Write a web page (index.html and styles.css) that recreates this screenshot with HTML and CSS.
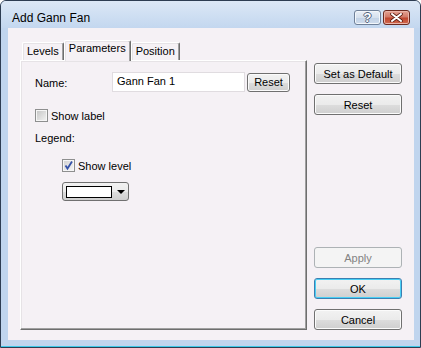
FILE: index.html
```html
<!DOCTYPE html>
<html>
    <head>
        <title>Add Gann Fan</title>
        <link rel="stylesheet" href="styles.css">
    </head>
    <body>
        <div class="window">
            <div class="titlebar">
                <span class="title">Add Gann Fan</span>
                <div class="caption-buttons">
                    <span class="cap-btn help">?</span>
                    <span class="cap-btn close">
                        <svg width="13" height="9" viewBox="0 0 13 9">
                            <path d="M2 1 L11 8 M11 1 L2 8" stroke="#5a1d12" stroke-width="3.6" stroke-linecap="round"/>
                            <path d="M2 1 L11 8 M11 1 L2 8" stroke="#ffffff" stroke-width="2" stroke-linecap="round"/>
                        </svg>
                    </span>
                </div>
            </div>
            <div class="frame">
                <div class="client">
                    <div class="tabs-area">
                        <div class="tab-strip">
                            <span class="tab">Levels</span>
                            <span class="tab selected">Parameters</span>
                            <span class="tab">Position</span>
                        </div>
                        <div class="panel">
                            <div class="name-row">
                                <span class="field-label">Name:</span>
                                <div class="text-input">Gann Fan 1</div>
                                <button class="btn btn-small">Reset</button>
                            </div>
                            <div class="check-row show-label">
                                <span class="checkbox"></span>
                                <span>Show label</span>
                            </div>
                            <div class="legend">Legend:</div>
                            <div class="check-row show-level">
                                <span class="checkbox checked">
                                    <svg width="11" height="11" viewBox="0 0 11 11">
                                        <path d="M2.5 5.5 L4.5 8.5 L9 1.5" fill="none" stroke="#3552a8" stroke-width="1.8"/>
                                    </svg>
                                </span>
                                <span>Show level</span>
                            </div>
                            <div class="color-picker">
                                <span class="swatch"></span>
                                <span class="arrow"></span>
                            </div>
                        </div>
                    </div>
                    <div class="side-buttons">
                        <div class="btn-group">
                            <button class="btn">Set as Default</button>
                            <button class="btn">Reset</button>
                        </div>
                        <div class="btn-group">
                            <button class="btn disabled">Apply</button>
                            <button class="btn default">OK</button>
                            <button class="btn">Cancel</button>
                        </div>
                    </div>
                </div>
            </div>
        </div>
    </body>
</html>
```

FILE: styles.css
```css
body {
    margin: 0;
    background: #ffffff;
    font-family: "Liberation Sans", Arial, sans-serif;
    font-size: 11px;
    color: #000;
}
.window {
    width: 421px;
    height: 348px;
    box-sizing: border-box;
    border: 1px solid #2d3d52;
    border-radius: 6px 6px 0 0;
    background: #c0d5ee;
    display: flex;
    flex-direction: column;
    overflow: hidden;
    box-shadow: inset 0 -1px 0 #3ec8e8;
}
.titlebar {
    height: 27px;
    flex: none;
    display: flex;
    justify-content: space-between;
    align-items: flex-start;
    padding: 0 10px 0 11px;
    background: linear-gradient(#dce8f6, #c3d7ef);
}
.title {
    margin-top: 10px;
    font-size: 12px;
    line-height: 15px;
}
.caption-buttons {
    display: flex;
    gap: 2px;
    margin-top: 9px;
}
.cap-btn {
    width: 27px;
    height: 15px;
    box-sizing: border-box;
    border-radius: 3px;
    display: flex;
    align-items: center;
    justify-content: center;
}
.help {
    border: 1px solid #6f8098;
    background: linear-gradient(#e9eff7 0%, #d6e1ee 50%, #c2d2e6 51%, #cfdcec 100%);
    box-shadow: inset 0 0 0 1px #f3f7fb;
    color: #fff;
    font-weight: bold;
    font-size: 13px;
    line-height: 13px;
    text-shadow: 1px 0 0 #50627a, -1px 0 0 #50627a, 0 1px 0 #50627a, 0 -1px 0 #50627a;
}
.close {
    width: 27px;
    border: 1px solid #6b2a20;
    background: linear-gradient(#e5a293 0%, #d27a68 45%, #c0462f 55%, #cf6a4f 100%);
    box-shadow: inset 0 0 0 1px #eab4a8;
}
.frame {
    flex: 1;
    display: flex;
    padding: 0 6px 7px 7px;
}
.client {
    flex: 1;
    display: flex;
    background: #f5f1f5;
    padding: 12px 0 10px 12px;
}
.tabs-area {
    width: 287px;
    display: flex;
    flex-direction: column;
}
.tab-strip {
    height: 20px;
    display: flex;
    align-items: flex-end;
    padding-left: 2px;
}
.tab {
    height: 18px;
    box-sizing: border-box;
    padding: 0 4px;
    line-height: 16px;
    border-top: 1px solid #ffffff;
    border-left: 1px solid #ffffff;
    border-right: 1px solid #6e6e6e;
    box-shadow: inset -1px 0 0 #a0a0a0, inset 1px 1px 0 #e6e3e6;
    border-radius: 2px 2px 0 0;
    background: #f5f1f5;
}
.tab.selected {
    height: 21px;
    line-height: 14px;
    margin-bottom: -1px;
    position: relative;
    z-index: 1;
}
.panel {
    flex: 1;
    display: flex;
    flex-direction: column;
    align-items: flex-start;
    padding: 11px 0 0 14px;
    border-top: 1px solid #ffffff;
    border-left: 1px solid #ffffff;
    border-right: 1px solid #6e6e6e;
    border-bottom: 1px solid #6e6e6e;
    box-shadow: inset -1px -1px 0 #a0a0a0, inset 1px 1px 0 #e6e3e6;
}
.name-row {
    height: 20px;
    display: flex;
    align-items: center;
}
.field-label {
    width: 77px;
    padding-top: 2px;
}
.text-input {
    width: 133px;
    height: 20px;
    box-sizing: border-box;
    border: 1px solid #e0dce0;
    background: #ffffff;
    padding-left: 4px;
    line-height: 17px;
}
.btn {
    width: 88px;
    height: 21px;
    box-sizing: border-box;
    padding: 0;
    border: 1px solid #707070;
    border-radius: 3px;
    background: linear-gradient(#f2f2f2 0%, #ebebeb 50%, #dddddd 51%, #cfcfcf 100%);
    box-shadow: inset 0 0 0 1px #fbfbfb;
    font-family: "Liberation Sans", Arial, sans-serif;
    font-size: 11px;
    color: #000;
}
.btn-small {
    width: 43px;
    height: 19px;
    margin-left: 2px;
}
.btn.disabled {
    border-color: #adb2b5;
    background: #f4f4f4;
    box-shadow: none;
    color: #838383;
}
.btn.default {
    border-color: #3c7fb1;
    box-shadow: inset 0 0 0 1px #48cff5;
}
.check-row {
    height: 13px;
    display: flex;
    align-items: center;
    gap: 3px;
}
.show-label {
    margin-top: 17px;
}
.checkbox {
    width: 13px;
    height: 13px;
    box-sizing: border-box;
    border: 1px solid #8e8f8f;
    background: linear-gradient(135deg, #c3c3c3, #f4f4f4);
    box-shadow: inset 0 0 0 1px #f6f6f6;
    display: flex;
}
.checkbox.checked {
    background: linear-gradient(135deg, #d0d0d0, #f7f7f7);
}
.legend {
    margin-top: 9px;
    line-height: 14px;
}
.show-level {
    margin-top: 14px;
    margin-left: 27px;
}
.color-picker {
    margin-top: 10px;
    margin-left: 27px;
    width: 67px;
    height: 19px;
    box-sizing: border-box;
    border: 1px solid #707070;
    border-radius: 3px;
    background: linear-gradient(#f2f2f2 0%, #ebebeb 50%, #dddddd 51%, #cfcfcf 100%);
    display: flex;
    align-items: center;
    padding-left: 3px;
}
.swatch {
    width: 46px;
    height: 12px;
    box-sizing: border-box;
    border: 1px solid #000;
    background: #fff;
}
.arrow {
    margin-left: 5px;
    width: 0;
    height: 0;
    border-left: 4px solid transparent;
    border-right: 4px solid transparent;
    border-top: 4px solid #000;
}
.side-buttons {
    margin-left: 7px;
    display: flex;
    flex-direction: column;
    justify-content: space-between;
    padding-top: 23px;
}
.btn-group {
    display: flex;
    flex-direction: column;
    gap: 10px;
}
```
